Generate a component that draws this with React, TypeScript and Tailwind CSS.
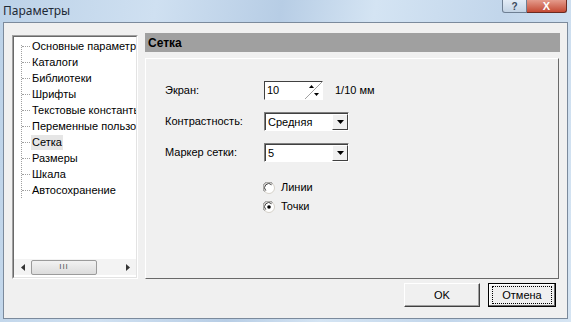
import React from 'react';

const treeItems = [
  'Основные параметры',
  'Каталоги',
  'Библиотеки',
  'Шрифты',
  'Текстовые константы',
  'Переменные пользователя',
  'Сетка',
  'Размеры',
  'Шкала',
  'Автосохранение',
];

const DownArrow = () => (
  <svg width="7" height="4" viewBox="0 0 7 4">
    <path d="M0 0h7L3.5 4z" fill="#000" />
  </svg>
);

const ComboBox: React.FC<{ value: string }> = ({ value }) => (
  <div className="flex h-[19px] w-[85px] border-t border-l border-[#808080] border-r border-b border-r-white border-b-white bg-white">
    <div className="flex flex-1 border-t border-l border-[#404040] border-r-0 border-b-0">
      <span className="flex-1 pl-[2px] leading-[16px]">{value}</span>
      <div className="flex h-[16px] w-[16px] items-center justify-center border border-t-white border-l-white border-r-[#404040] border-b-[#404040] bg-[#f0f0f0]">
        <DownArrow />
      </div>
    </div>
  </div>
);

const Radio: React.FC<{ checked?: boolean; label: string }> = ({ checked, label }) => (
  <div className="flex h-[19px] items-center gap-[6px]">
    <svg width="12" height="12" viewBox="0 0 12 12">
      <circle cx="6" cy="6" r="5.5" fill="#fff" stroke="#d4d0c8" />
      <path d="M1.5 9.5A5 5 0 0 1 9.5 1.5" fill="none" stroke="#808080" />
      <path d="M2.8 8.6A3.8 3.8 0 0 1 8.6 2.8" fill="none" stroke="#404040" />
      {checked && <circle cx="6" cy="6" r="1.8" fill="#000" />}
    </svg>
    <span>{label}</span>
  </div>
);

export default function App() {
  return (
    <div
      className="relative flex h-[322px] w-[571px] flex-col overflow-hidden bg-[linear-gradient(100deg,#bcd2e8_0%,#cfe0f1_25%,#b7cde5_45%,#d4e4f3_60%,#c2d6eb_80%,#d6e5f3_100%)] text-[11px] text-black"
      style={{ fontFamily: '"Liberation Sans", Arial, sans-serif' }}
    >
      {/* title bar */}
      <div className="flex h-[22px] items-start">
        <span
          className="pl-[3px] pt-[2px] text-[12px] text-[#1e2a36]"
          style={{ fontFamily: '"Noto Sans", "Open Sans", sans-serif' }}
        >
          Параметры
        </span>
        <div className="ml-auto mr-[4px] flex h-[13px]">
          <div className="flex w-[25px] items-end justify-center rounded-bl-[3px] border border-t-0 border-[#6e7f93] bg-[linear-gradient(#e3ecf6,#c3d3e4)] text-[10px] leading-[10px] font-bold text-[#3a4a5c]">
            ?
          </div>
          <div className="flex w-[40px] items-end justify-center rounded-br-[3px] border border-t-0 border-l-0 border-[#6b2a21] bg-[linear-gradient(#e49b8c,#c44a34)] text-[11px] leading-[11px] font-bold text-white">
            X
          </div>
        </div>
      </div>

      {/* client area */}
      <div className="mx-[3px] flex h-[297px] flex-col border border-[#7b8a9c] bg-[#f0f0f0]">
        <div className="flex pt-[10px]">
          {/* tree */}
          <div className="ml-[8px] mt-[2px] flex h-[244px] w-[126px] flex-col border border-t-[#a0a0a0] border-l-[#a0a0a0] border-r-white border-b-white">
            <div className="flex flex-1 flex-col overflow-hidden border border-t-[#696969] border-l-[#696969] border-r-[#e3e3e3] border-b-[#e3e3e3] bg-white">
              <div className="relative flex flex-1 flex-col pt-[1px]">
                <div className="absolute left-[7px] top-[8px] h-[153px] border-l border-dotted border-[#a0a0a0]" />
                {treeItems.map((item) => (
                  <div key={item} className="flex h-[16px] items-center whitespace-nowrap">
                    <div className="ml-[8px] w-[8px] shrink-0 border-t border-dotted border-[#a0a0a0]" />
                    <span
                      className={
                        item === 'Сетка'
                          ? 'ml-[1px] shrink-0 bg-[#e6e6e6] px-[1px] leading-[15px]'
                          : 'ml-[1px] shrink-0 px-[1px] leading-[15px]'
                      }
                    >
                      {item}
                    </span>
                  </div>
                ))}
              </div>
              {/* horizontal scrollbar */}
              <div className="mb-[2px] flex h-[16px] items-center bg-[#f3f3f3]">
                <div className="flex w-[17px] items-center justify-center">
                  <svg width="4" height="7" viewBox="0 0 4 7">
                    <path d="M4 0v7L0 3.5z" fill="#333" />
                  </svg>
                </div>
                <div className="flex h-[15px] w-[66px] items-center justify-center rounded-[2px] border border-[#9b9b9b] bg-[linear-gradient(#f2f2f2,#dcdcdc)] text-[8px] tracking-[1px] text-[#555]">
                  III
                </div>
                <div className="ml-auto flex w-[17px] items-center justify-center">
                  <svg width="4" height="7" viewBox="0 0 4 7">
                    <path d="M0 0v7L4 3.5z" fill="#333" />
                  </svg>
                </div>
              </div>
            </div>
          </div>

          {/* right side */}
          <div className="ml-[7px] flex w-[415px] flex-col">
            <div className="flex h-[19px] items-center bg-[#a0a0a0] pl-[3px] text-[12px] font-bold">Сетка</div>
            <div className="mt-[6px] flex h-[221px] w-[414px] flex-col border border-t-white border-l-white border-r-[#696969] border-b-[#696969] pl-[19px] pt-[22px]">
              <div className="grid grid-cols-[99px_auto] items-center gap-y-[12px]">
                <span>Экран:</span>
                <div className="flex items-center">
                  <div className="flex h-[19px] w-[59px] border border-t-[#404040] border-l-[#404040] border-r-white border-b-white bg-white">
                    <span className="flex-1 pl-[2px] leading-[16px]">10</span>
                    <svg width="17" height="17" viewBox="0 0 17 17">
                      <path d="M0 17L17 0" stroke="#a0a0a0" />
                      <path d="M4 6h5L6.5 3z" fill="#000" />
                      <path d="M9 11h5l-2.5 3z" fill="#000" />
                    </svg>
                  </div>
                  <span className="ml-[12px]">1/10 мм</span>
                </div>
                <span>Контрастность:</span>
                <ComboBox value="Средняя" />
                <span>Маркер сетки:</span>
                <ComboBox value="5" />
              </div>
              <div className="ml-[98px] mt-[16px] flex flex-col">
                <Radio label="Линии" />
                <Radio checked label="Точки" />
              </div>
            </div>
          </div>
        </div>

        {/* buttons */}
        <div className="mt-[4px] flex justify-end gap-[8px] pr-[11px]">
          <button className="h-[24px] w-[76px] border border-t-white border-l-white border-r-[#404040] border-b-[#404040] bg-[#f0f0f0] shadow-[inset_-1px_-1px_0_#a0a0a0]">
            OK
          </button>
          <button className="flex h-[24px] w-[68px] items-center justify-center border border-black bg-[#f0f0f0] shadow-[inset_-1px_-1px_0_#696969,inset_1px_1px_0_#fff]">
            <span className="flex h-[18px] w-[60px] items-center justify-center border border-dotted border-black">Отмена</span>
          </button>
        </div>
      </div>
    </div>
  );
}
